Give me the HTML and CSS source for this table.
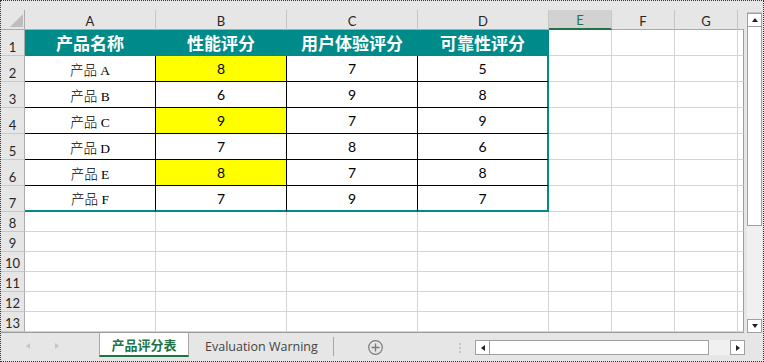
FILE: index.html
```html
<!DOCTYPE html>
<html>
<head>
<meta charset="utf-8">
<link rel="stylesheet" href="styles.css">
</head>
<body>
<div class="window">
  <div class="main">
    <div class="sheet">
      <div class="grid">
        <div class="c corner"><span class="ctri"></span></div>
        <div class="c ch">A</div><div class="c ch">B</div><div class="c ch">C</div><div class="c ch">D</div>
        <div class="c ch sel">E</div><div class="c ch">F</div><div class="c ch">G</div><div class="c hx"></div>

        <div class="c rh">1</div>
        <div class="c th">产品名称</div><div class="c th">性能评分</div><div class="c th">用户体验评分</div><div class="c th lc">可靠性评分</div>
        <div class="c"></div><div class="c"></div><div class="c"></div><div class="c x"></div>

        <div class="c rh">2</div>
        <div class="c d nm">产品 A</div><div class="c d n y">8</div><div class="c d n">7</div><div class="c d n lc">5</div>
        <div class="c"></div><div class="c"></div><div class="c"></div><div class="c x"></div>

        <div class="c rh">3</div>
        <div class="c d nm">产品 B</div><div class="c d n">6</div><div class="c d n">9</div><div class="c d n lc">8</div>
        <div class="c"></div><div class="c"></div><div class="c"></div><div class="c x"></div>

        <div class="c rh">4</div>
        <div class="c d nm">产品 C</div><div class="c d n y">9</div><div class="c d n">7</div><div class="c d n lc">9</div>
        <div class="c"></div><div class="c"></div><div class="c"></div><div class="c x"></div>

        <div class="c rh">5</div>
        <div class="c d nm">产品 D</div><div class="c d n">7</div><div class="c d n">8</div><div class="c d n lc">6</div>
        <div class="c"></div><div class="c"></div><div class="c"></div><div class="c x"></div>

        <div class="c rh">6</div>
        <div class="c d nm">产品 E</div><div class="c d n y">8</div><div class="c d n">7</div><div class="c d n lc">8</div>
        <div class="c"></div><div class="c"></div><div class="c"></div><div class="c x"></div>

        <div class="c rh">7</div>
        <div class="c d nm lr">产品 F</div><div class="c d n lr">7</div><div class="c d n lr">9</div><div class="c d n lc lr">7</div>
        <div class="c"></div><div class="c"></div><div class="c"></div><div class="c x"></div>

        <div class="c rh">8</div>
        <div class="c"></div><div class="c"></div><div class="c"></div><div class="c"></div><div class="c"></div><div class="c"></div><div class="c"></div><div class="c x"></div>
        <div class="c rh">9</div>
        <div class="c"></div><div class="c"></div><div class="c"></div><div class="c"></div><div class="c"></div><div class="c"></div><div class="c"></div><div class="c x"></div>
        <div class="c rh">10</div>
        <div class="c"></div><div class="c"></div><div class="c"></div><div class="c"></div><div class="c"></div><div class="c"></div><div class="c"></div><div class="c x"></div>
        <div class="c rh">11</div>
        <div class="c"></div><div class="c"></div><div class="c"></div><div class="c"></div><div class="c"></div><div class="c"></div><div class="c"></div><div class="c x"></div>
        <div class="c rh">12</div>
        <div class="c"></div><div class="c"></div><div class="c"></div><div class="c"></div><div class="c"></div><div class="c"></div><div class="c"></div><div class="c x"></div>
        <div class="c rh">13</div>
        <div class="c"></div><div class="c"></div><div class="c"></div><div class="c"></div><div class="c"></div><div class="c"></div><div class="c"></div><div class="c x"></div>
      </div>
    </div>
    <div class="vscroll">
      <div class="vbtn"><span class="tri-up"></span></div>
      <div class="vthumb"></div>
      <div class="vtrack"></div>
      <div class="vbtn"><span class="tri-down"></span></div>
    </div>
  </div>
  <div class="tabbar">
    <div class="nav"><span class="nl"></span><span class="nr"></span></div>
    <div class="tab active">产品评分表</div>
    <div class="tab2">Evaluation Warning</div>
    <div class="sep"></div>
    <div class="add">
      <svg width="15" height="15" viewBox="0 0 15 15"><circle cx="7.5" cy="7.5" r="6.8" fill="none" stroke="#7a7a7a" stroke-width="1.2"/><path d="M7.5 3.5V11.5M3.5 7.5H11.5" stroke="#7a7a7a" stroke-width="1.4"/></svg>
    </div>
    <div class="dots"><i></i><i></i><i></i></div>
    <div class="hscroll">
      <div class="hbtn"><span class="tri-left"></span></div>
      <div class="hthumb"></div>
      <div class="htrack"></div>
      <div class="hbtn"><span class="tri-right"></span></div>
    </div>
  </div>
</div>
</body>
</html>
```
FILE: styles.css
```css
html, body {
  margin: 0;
  padding: 0;
}
body {
  width: 764px;
  height: 362px;
  overflow: hidden;
  background: #e6e6e6;
}
.window {
  box-sizing: border-box;
  width: 764px;
  height: 362px;
  border: 1px dotted #333;
  background: #e6e6e6;
  display: flex;
  flex-direction: column;
}
.main {
  display: flex;
  height: 332px;
}
.sheet {
  padding-top: 9px;
  width: 743px;
}
.grid {
  display: grid;
  grid-template-columns: 24px repeat(4, 131px) repeat(3, 63px) 6px;
  grid-template-rows: 20px repeat(7, 26px) repeat(6, 20px);
  border-bottom: 1px solid #9c9c9c;
  background: #fff;
}
.c {
  box-sizing: border-box;
  display: flex;
  align-items: center;
  justify-content: center;
  border-right: 1px solid #d4d4d4;
  border-bottom: 1px solid #d4d4d4;
  overflow: hidden;
  white-space: nowrap;
}
.corner {
  background: #e6e6e6;
  border-right-color: #ababab;
  border-bottom-color: #ababab;
  justify-content: flex-end;
  align-items: flex-end;
  padding: 0 1px 2px 0;
}
.ctri {
  width: 0;
  height: 0;
  border-left: 13px solid transparent;
  border-bottom: 13px solid #bdbdbd;
}
.ch {
  background: #e6e6e6;
  border-right-color: #c6c6c6;
  border-bottom-color: #ababab;
  font: 13px Lato, sans-serif;
  color: #262626;
  padding-top: 2px;
}
.ch.sel {
  background: #d2d2d2;
  color: #217346;
  border-bottom: 2px solid #217346;
}
.hx {
  background: #e6e6e6;
  border-right: none;
  border-bottom-color: #ababab;
}
.rh {
  background: #e6e6e6;
  border-right-color: #ababab;
  border-bottom-color: #c8c8c8;
  align-items: flex-end;
  padding-bottom: 1px;
  font: 13px/14px Lato, sans-serif;
  color: #262626;
}
.th {
  background: #008b8b;
  color: #fff;
  font: 700 17px "Noto Sans CJK SC", sans-serif;
  border-right-color: #008b8b;
  border-bottom-color: #008b8b;
}
.d {
  border-right-color: #000;
  border-bottom-color: #000;
  color: #000;
}
.nm {
  font: 300 13.5px "Liberation Serif", "Noto Sans CJK SC", serif;
}
.n {
  font: 14px Lato, sans-serif;
}
.y {
  background: #ffff00;
}
.lc {
  border-right: 2px solid #008b8b;
}
.lr {
  border-bottom: 2px solid #008b8b;
}
.x {
  border-right-color: #9c9c9c;
}

/* vertical scrollbar */
.vscroll {
  box-sizing: border-box;
  width: 15px;
  height: 321px;
  margin: 11px 0 0 3px;
  background: #f0f0f0;
  border-top: 1px solid #c4c4c4;
  display: flex;
  flex-direction: column;
}
.vbtn {
  box-sizing: border-box;
  height: 14px;
  border: 1px solid #a0a0a0;
  background: #fff;
  display: flex;
  align-items: center;
  justify-content: center;
}
.vthumb {
  box-sizing: border-box;
  height: 199px;
  background: #fff;
  border: 1px solid #a0a0a0;
  border-top: none;
}
.vtrack {
  flex: 1;
}
.tri-up {
  width: 0;
  height: 0;
  border-left: 3.5px solid transparent;
  border-right: 3.5px solid transparent;
  border-bottom: 4px solid #222;
}
.tri-down {
  width: 0;
  height: 0;
  border-left: 3.5px solid transparent;
  border-right: 3.5px solid transparent;
  border-top: 4px solid #222;
}

/* tab bar */
.tabbar {
  display: flex;
  align-items: flex-start;
  height: 28px;
}
.nav {
  box-sizing: border-box;
  width: 98px;
  display: flex;
  gap: 25px;
  padding: 10px 0 0 25px;
}
.nl {
  width: 0;
  height: 0;
  border-top: 3.5px solid transparent;
  border-bottom: 3.5px solid transparent;
  border-right: 4px solid #c4c4c4;
}
.nr {
  width: 0;
  height: 0;
  border-top: 3.5px solid transparent;
  border-bottom: 3.5px solid transparent;
  border-left: 4px solid #c4c4c4;
}
.tab {
  box-sizing: border-box;
  width: 90px;
  height: 24px;
  display: flex;
  align-items: center;
  justify-content: center;
}
.tab.active {
  background: #fff;
  border-left: 1px solid #a6a6a6;
  border-right: 1px solid #a6a6a6;
  border-bottom: 2px solid #217346;
  color: #217346;
  font: 700 13px "Noto Sans CJK SC", sans-serif;
  padding-top: 1px;
}
.tab2 {
  box-sizing: border-box;
  width: 144px;
  height: 26px;
  padding-left: 16px;
  display: flex;
  align-items: center;
  font: 12.5px "Open Sans", sans-serif;
  color: #444;
}
.sep {
  width: 1px;
  height: 19px;
  margin-top: 4px;
  background: #a6a6a6;
}
.add {
  width: 15px;
  height: 15px;
  margin: 7px 0 0 34px;
}
.add svg {
  display: block;
}
.dots {
  width: 2px;
  margin: 10px 0 0 76px;
  display: flex;
  flex-direction: column;
  gap: 2px;
}
.dots i {
  display: block;
  width: 2px;
  height: 2px;
  background: #c4c4c4;
}
.hscroll {
  box-sizing: border-box;
  width: 270px;
  height: 15px;
  margin: 7px 0 0 14px;
  display: flex;
  background: #f0f0f0;
}
.hbtn {
  box-sizing: border-box;
  width: 15px;
  height: 15px;
  border: 1px solid #a0a0a0;
  background: #fff;
  display: flex;
  align-items: center;
  justify-content: center;
}
.hthumb {
  box-sizing: border-box;
  width: 219px;
  background: #fff;
  border: 1px solid #a0a0a0;
  border-left: none;
}
.htrack {
  flex: 1;
}
.tri-left {
  width: 0;
  height: 0;
  border-top: 3.5px solid transparent;
  border-bottom: 3.5px solid transparent;
  border-right: 4px solid #222;
}
.tri-right {
  width: 0;
  height: 0;
  border-top: 3.5px solid transparent;
  border-bottom: 3.5px solid transparent;
  border-left: 4px solid #222;
}
```
